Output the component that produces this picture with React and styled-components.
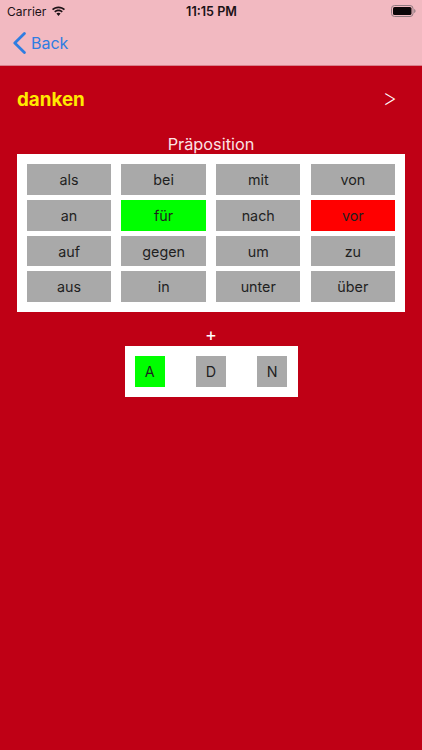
import React from "react";
import styled, { createGlobalStyle } from "styled-components";

const GlobalStyle = createGlobalStyle`
  html, body {
    margin: 0;
    padding: 0;
    background: #bf0015;
  }
  * {
    box-sizing: border-box;
  }
`;

const Screen = styled.div`
  width: 422px;
  height: 750px;
  overflow: hidden;
  display: flex;
  flex-direction: column;
  align-items: center;
  background: #bf0015;
  font-family: Inter, "Liberation Sans", sans-serif;
`;

const Header = styled.header`
  width: 100%;
  height: 66px;
  flex: none;
  background: #f2b9c1;
  border-bottom: 1px solid #d9808c;
`;

const StatusBar = styled.div`
  height: 21px;
  display: grid;
  grid-template-columns: 1fr auto 1fr;
  align-items: center;
  padding: 1px 6px 0 7px;
  color: #1c1216;
  font-size: 12px;
`;

const Carrier = styled.div`
  display: flex;
  align-items: center;
  gap: 5px;
`;

const Clock = styled.div`
  font-weight: 600;
  font-size: 12.6px;
`;

const Battery = styled.svg`
  justify-self: end;
`;

const NavBar = styled.div`
  height: 44px;
  display: flex;
  align-items: center;
  gap: 5px;
  padding: 0 0 0 13px;
  color: #2f7de1;
  font-size: 16px;
`;

const WordRow = styled.div`
  width: 100%;
  height: 66.4px;
  flex: none;
  display: flex;
  align-items: center;
  justify-content: space-between;
  padding: 0 25px 0 17px;
`;

const Word = styled.div`
  color: #ffea00;
  font-weight: 700;
  font-size: 18.8px;
`;

const Next = styled.div`
  color: #fff;
  font-size: 23px;
  font-weight: 200;
  margin-top: -2px;
`;

const Caption = styled.div`
  color: #fbe3e5;
  font-size: 16.3px;
  line-height: 24px;
  height: 22px;
  text-align: center;
`;

const Panel = styled.div`
  background: #fff;
  display: grid;
  padding: 10px;
  width: ${(p) => p.$width}px;
  column-gap: ${(p) => p.$gapX}px;
  row-gap: 5.2px;
  grid-template-columns: repeat(${(p) => p.$cols}, ${(p) => p.$cell}px);
  grid-auto-rows: ${(p) => p.$rowHeight}px;
`;

const Choice = styled.div`
  display: flex;
  align-items: center;
  justify-content: center;
  color: #1f1f1f;
  font-size: 14.3px;
  background: ${(p) =>
    p.$state === "right" ? "#00ff00" : p.$state === "wrong" ? "#ff0000" : "#a9a9a9"};
`;

const Plus = styled.div`
  margin-top: 12px;
  height: 22px;
  color: #fff;
  font-size: 18px;
  line-height: 22px;
  text-align: center;
`;

const prepositions = [
  ["als"], ["bei"], ["mit"], ["von"],
  ["an"], ["für", "right"], ["nach"], ["vor", "wrong"],
  ["auf"], ["gegen"], ["um"], ["zu"],
  ["aus"], ["in"], ["unter"], ["über"],
];

const cases = [["A", "right"], ["D"], ["N"]];

const App = () => (
  <>
    <GlobalStyle />
    <Screen>
      <Header>
        <StatusBar>
          <Carrier>
            Carrier
            <svg width="15" height="11" viewBox="0 0 15 11">
              <path
                d="M7.5 2.2c2.1 0 4 .8 5.4 2.1l1.1-1.2C12.3 1.5 10 .5 7.5.5S2.7 1.5 1 3.1l1.1 1.2C3.5 3 5.4 2.2 7.5 2.2z"
                fill="#1c1216"
              />
              <path
                d="M7.5 5.3c1.2 0 2.3.5 3.2 1.2l1.1-1.2C10.6 4.3 9.1 3.6 7.5 3.6s-3.1.7-4.3 1.7l1.1 1.2c.9-.7 2-1.2 3.2-1.2z"
                fill="#1c1216"
              />
              <path
                d="M7.5 6.8c-.8 0-1.5.3-2.1.8l2.1 2.4 2.1-2.4c-.6-.5-1.3-.8-2.1-.8z"
                fill="#1c1216"
              />
            </svg>
          </Carrier>
          <Clock>11:15 PM</Clock>
          <Battery width="25" height="12" viewBox="0 0 25 12">
            <rect x="0.5" y="0.5" width="21.5" height="11" rx="3" fill="none" stroke="#8f7a80" />
            <rect x="2" y="2" width="18.5" height="8" rx="1.6" fill="#0c0608" />
            <path d="M23.2 4v4c.8-.3 1.3-1 1.3-2s-.5-1.7-1.3-2z" fill="#8f7a80" />
          </Battery>
        </StatusBar>
        <NavBar>
          <svg width="13" height="22" viewBox="0 0 13 22">
            <path
              d="M11.4 1.6 1.8 11l9.6 9.4"
              fill="none"
              stroke="#2f7de1"
              strokeWidth="2.8"
              strokeLinecap="round"
              strokeLinejoin="round"
            />
          </svg>
          Back
        </NavBar>
      </Header>
      <WordRow>
        <Word>danken</Word>
        <Next>&gt;</Next>
      </WordRow>
      <Caption>Präposition</Caption>
      <Panel $width={388.4} $cols={4} $cell={84.5} $gapX={10.1} $rowHeight={30.5}>
        {prepositions.map(([label, state]) => (
          <Choice key={label} $state={state}>
            {label}
          </Choice>
        ))}
      </Panel>
      <Plus>+</Plus>
      <Panel $width={173} $cols={3} $cell={30.5} $gapX={30.7} $rowHeight={31}>
        {cases.map(([label, state]) => (
          <Choice key={label} $state={state}>
            {label}
          </Choice>
        ))}
      </Panel>
    </Screen>
  </>
);

export default App;
